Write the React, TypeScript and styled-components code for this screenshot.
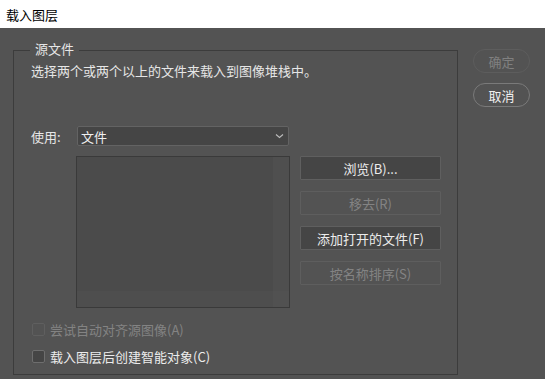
import React from "react";
import styled, { createGlobalStyle } from "styled-components";

const Global = createGlobalStyle`
  html, body { margin: 0; padding: 0; }
  body {
    width: 545px; height: 379px; overflow: hidden;
    font-family: "Noto Sans CJK SC", "Noto Sans", sans-serif;
    font-size: 13px;
  }
`;

const Window = styled.div`
  width: 545px;
  height: 379px;
  display: flex;
  flex-direction: column;
  background: #535353;
`;

const TitleBar = styled.div`
  height: 28px;
  background: #ffffff;
  color: #000;
  display: flex;
  align-items: center;
  padding-left: 6px;
  font-size: 13px;
`;

const Body = styled.div`
  flex: 1;
  display: flex;
  padding: 14px 0 0 13px;
  color: #e6e6e6;
`;

const Group = styled.fieldset`
  margin: 0;
  width: 445px;
  height: 333px;
  box-sizing: border-box;
  border: 1px solid #3c3c3c;
  padding: 0 0 0 17px;
  display: flex;
  flex-direction: column;
`;

const Legend = styled.legend`
  padding: 0 5px;
  margin-left: -1px;
  font-size: 13px;
  line-height: 16px;
  color: #e6e6e6;
  position: relative;
  top: -1px;
`;

const Desc = styled.div`
  margin-top: 4px;
  line-height: 18px;
  color: #e6e6e6;
`;

const UseRow = styled.div`
  margin-top: 46px;
  display: flex;
  align-items: center;
`;

const Label = styled.span`
  width: 46px;
`;

const Select = styled.div`
  width: 212px;
  height: 20px;
  box-sizing: border-box;
  border: 1px solid #636363;
  border-radius: 2px;
  background: #454545;
  display: flex;
  align-items: center;
  justify-content: space-between;
  padding: 0 4px 0 3px;
  color: #f0f0f0;
`;

const Middle = styled.div`
  margin-top: 10px;
  display: flex;
  gap: 10px;
`;

const ListBox = styled.div`
  width: 214px;
  height: 152px;
  box-sizing: border-box;
  border: 1px solid #3a3a3a;
  margin-left: 45px;
  background: #4b4b4b;
  display: grid;
  grid-template-columns: 1fr 16px;
  grid-template-rows: 1fr 16px;
`;

const ListCell = styled.div<{ $tone: string }>`
  background: ${(p) => p.$tone};
`;

const ButtonCol = styled.div`
  display: flex;
  flex-direction: column;
  gap: 11px;
`;

const SideButton = styled.div<{ $disabled?: boolean }>`
  width: 141px;
  height: 24px;
  box-sizing: border-box;
  border: 1px solid ${(p) => (p.$disabled ? "#5e5e5e" : "#5f5f5f")};
  background: ${(p) => (p.$disabled ? "#535353" : "#454545")};
  color: ${(p) => (p.$disabled ? "#838383" : "#ececec")};
  display: flex;
  align-items: center;
  justify-content: center;
  border-radius: 1px;
`;

const Checks = styled.div`
  margin-top: 12px;
  display: flex;
  flex-direction: column;
  gap: 8px;
`;

const CheckRow = styled.div<{ $disabled?: boolean }>`
  display: flex;
  align-items: center;
  gap: 5px;
  height: 19px;
  color: ${(p) => (p.$disabled ? "#838383" : "#ececec")};
`;

const Box = styled.span<{ $disabled?: boolean }>`
  width: 11px;
  height: 11px;
  border: 1px solid ${(p) => (p.$disabled ? "#5f5f5f" : "#6e6e6e")};
  border-radius: 2px;
  background: ${(p) => (p.$disabled ? "#535353" : "#454545")};
  margin-left: 1px;
`;

const Side = styled.div`
  display: flex;
  flex-direction: column;
  gap: 10px;
  margin-left: 15px;
  margin-top: 7px;
`;

const Pill = styled.div<{ $disabled?: boolean }>`
  width: 57px;
  height: 24px;
  box-sizing: border-box;
  border: 1px solid ${(p) => (p.$disabled ? "#5d5d5d" : "#7a7a7a")};
  border-radius: 12px;
  display: flex;
  align-items: center;
  justify-content: center;
  color: ${(p) => (p.$disabled ? "#808080" : "#f0f0f0")};
`;

const Chevron = () => (
  <svg width="9" height="6" viewBox="0 0 9 6">
    <path d="M1 1.5 L4.5 4.5 L8 1.5" stroke="#bdbdbd" strokeWidth="1.1" fill="none" />
  </svg>
);

export default function App() {
  return (
    <>
      <Global />
      <Window>
        <TitleBar>载入图层</TitleBar>
        <Body>
          <Group>
            <Legend>源文件</Legend>
            <Desc>选择两个或两个以上的文件来载入到图像堆栈中。</Desc>
            <UseRow>
              <Label>使用:</Label>
              <Select>
                <span>文件</span>
                <Chevron />
              </Select>
            </UseRow>
            <Middle>
              <ListBox>
                <ListCell $tone="#4b4b4b" />
                <ListCell $tone="#4f4f4f" />
                <ListCell $tone="#4e4e4e" />
                <ListCell $tone="#515151" />
              </ListBox>
              <ButtonCol>
                <SideButton>浏览(B)...</SideButton>
                <SideButton $disabled>移去(R)</SideButton>
                <SideButton>添加打开的文件(F)</SideButton>
                <SideButton $disabled>按名称排序(S)</SideButton>
              </ButtonCol>
            </Middle>
            <Checks>
              <CheckRow $disabled>
                <Box $disabled />
                尝试自动对齐源图像(A)
              </CheckRow>
              <CheckRow>
                <Box />
                载入图层后创建智能对象(C)
              </CheckRow>
            </Checks>
          </Group>
          <Side>
            <Pill $disabled>确定</Pill>
            <Pill>取消</Pill>
          </Side>
        </Body>
      </Window>
    </>
  );
}
